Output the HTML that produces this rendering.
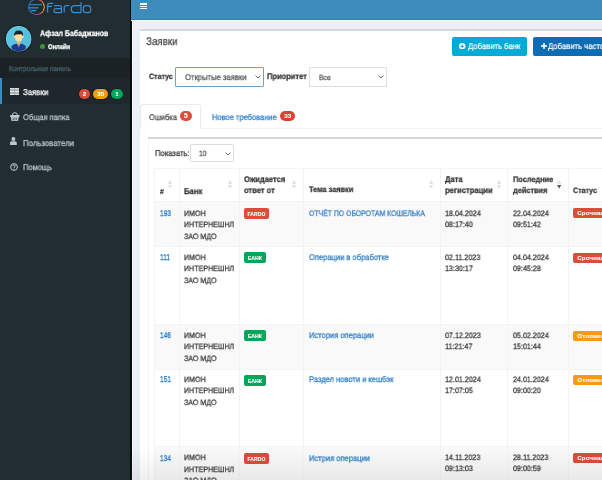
<!DOCTYPE html>
<html><head><meta charset="utf-8">
<style>
*{box-sizing:border-box;margin:0;padding:0}
html,body{width:602px;height:480px;overflow:hidden;background:#ecf0f5;font-family:"Liberation Sans",sans-serif;color:#333}
.abs{position:absolute}
.t{position:absolute;white-space:nowrap;line-height:1;text-rendering:geometricPrecision;-webkit-text-stroke:0.25px currentColor;will-change:transform}
.bd{position:absolute;color:#fff;font-weight:bold;text-align:center;white-space:nowrap;overflow:hidden;-webkit-text-stroke:0.1px #fff;will-change:transform}
</style></head><body>
<div class="abs" style="left:0px;top:0px;width:131px;height:480px;background:#222d32"></div>
<div class="abs" style="left:130.4px;top:0px;width:1.2px;height:480px;background:#0a0c0e"></div>
<div class="abs" style="left:131.6px;top:20px;width:1.4px;height:460px;background:#f6f8fb"></div>
<svg class="abs" style="left:0;top:0" width="131" height="20" viewBox="0 0 131 20">
<defs><linearGradient id="lg" x1="0" y1="0.5" x2="1" y2="0.3"><stop offset="0" stop-color="#2466c2"/><stop offset="0.45" stop-color="#3a7fd0"/><stop offset="0.6" stop-color="#c05a7a"/><stop offset="0.8" stop-color="#f39030"/><stop offset="1" stop-color="#f39030"/></linearGradient></defs>
<path d="M28.8 4.75h13.2M28 7.8h10.5M31 10.6h5" stroke="#2e9bd2" stroke-width="1.2"/>
<g fill="none" stroke="#3b8cce" stroke-width="1.2" stroke-linejoin="round">
<path d="M47.6 12.6V5.2q0-1.9 1.9-1.9h3.7M47.6 6.4h4.4"/>
<path d="M54 5.6h5.6q1.9 0 1.9 1.9v5.1h-5.6q-1.9 0-1.9-1.9v-0.2q0-1.9 1.9-1.9h5.6"/>
<path d="M64.2 12.6V7.5q0-1.9 1.9-1.9h3.3"/>
<path d="M81 2.2v10.4h-6.6q-3.1 0-3.1-3.1v-0.8q0-3.1 3.1-3.1h6.6"/>
<rect x="83.3" y="5.6" width="7.4" height="7" rx="2.6"/>
</g></svg>
<div class="abs" style="left:27.75px;top:-1.45px;width:16.9px;height:16.9px;border-radius:50%;background:conic-gradient(from 0deg,#b0588a 0deg,#e8703e 45deg,#f39030 80deg,#f08a34 125deg,#c8607a 160deg,#6a5ab0 190deg,#2a6fc6 220deg,#2a6fc6 320deg,#4a62b0 345deg,#b0588a 360deg);-webkit-mask:radial-gradient(circle,transparent 6.9px,#000 7.3px,#000 8.45px,transparent 8.5px)"></div>
<svg class="abs" style="left:4px;top:25px" width="29" height="29" viewBox="0 0 29 29">
<defs><clipPath id="cp"><circle cx="14.65" cy="13.65" r="12.4"/></clipPath></defs>
<circle cx="14.65" cy="13.65" r="13.7" fill="#161d21"/>
<circle cx="14.65" cy="13.65" r="12.7" fill="#78d6ec"/>
<circle cx="14.65" cy="13.65" r="12" fill="#58c6e2"/>
<g clip-path="url(#cp)">
<path d="M22 2 L30 10 L30 30 L14 30 Z" fill="#4db8d6" opacity="0.5"/>
<path d="M7 29 L7.6 21.2 Q9.5 19 14.65 18.6 Q19.8 19 21.7 21.2 L22.3 29 Z" fill="#1f3b8c"/>
<path d="M13.2 18.7 L14.65 22.5 L16.1 18.7 Z" fill="#e9f0f6"/>
<path d="M14.2 19.5 L14.65 23 L15.1 19.5 Z" fill="#1a2a6a"/>
<rect x="13" y="15" width="3.3" height="3.8" fill="#efb26c"/>
<ellipse cx="10.3" cy="11.8" rx="0.9" ry="1.3" fill="#f3cf92"/>
<ellipse cx="19" cy="11.8" rx="0.9" ry="1.3" fill="#f3cf92"/>
<path d="M10.6 8.5 Q10.6 16.8 14.65 16.8 Q18.7 16.8 18.7 8.5 Z" fill="#f8dca2"/>
<path d="M10.2 11.3 Q9.6 5.3 14.65 5.4 Q19.7 5.3 19.1 11.3 Q18.6 9.6 17.2 9.3 Q14.5 8.9 12.2 9.6 Q10.8 10 10.2 11.3Z" fill="#1f1f22"/>
</g></svg>
<div class="t" style="left:40px;top:29.72px;font-size:8.25px;color:#fff;font-weight:bold;transform:scaleX(0.85);transform-origin:0 0;">Афзал Бабаджанов</div>
<div class="abs" style="left:40.3px;top:44.4px;width:5px;height:5px;border-radius:50%;background:#3f913f"></div>
<div class="t" style="left:48.4px;top:45.33px;font-size:6.93px;color:#fff;font-weight:bold;transform:scaleX(0.8455);transform-origin:0 0;">Онлайн</div>
<div class="abs" style="left:0px;top:58px;width:130px;height:20px;background:#1a2226"></div>
<div class="t" style="left:8.6px;top:65.95px;font-size:7.15px;color:#4b646f;transform:scaleX(0.9091);transform-origin:0 0;">Контрольная панель</div>
<div class="abs" style="left:0px;top:78px;width:130px;height:26px;background:#1e282c"></div>
<div class="abs" style="left:0px;top:78px;width:2px;height:26px;background:#3c8dbc"></div>
<svg class="abs" style="left:9.8px;top:87.8px" width="9" height="7" viewBox="0 0 9 7"><rect x="0" y="0" width="9" height="7" fill="#a9acae"/><path d="M0 0.8h9M0 3.5h9M0 6.2h9" stroke="#eef0f1" stroke-width="1.1"/><path d="M4.6 0v7" stroke="#8d9194" stroke-width="0.6"/></svg>
<div class="t" style="left:23.3px;top:87.64px;font-size:8.58px;color:#fff;transform:scaleX(0.9091);transform-origin:0 0;">Заявки</div>
<div class="bd" style="box-shadow:0 0 0 0.8px #161d21;left:79px;top:89.1px;width:11.2px;height:10.4px;line-height:10.4px;background:#dd4b39;border-radius:5.5px;font-size:6.2px;padding-top:0.3px">2</div>
<div class="bd" style="box-shadow:0 0 0 0.8px #161d21;left:93px;top:89.1px;width:15.3px;height:10.4px;line-height:10.4px;background:#f39c12;border-radius:5.5px;font-size:6.2px;padding-top:0.3px">35</div>
<div class="bd" style="box-shadow:0 0 0 0.8px #161d21;left:111px;top:89.1px;width:11.9px;height:10.4px;line-height:10.4px;background:#00a65a;border-radius:5.5px;font-size:6.2px;padding-top:0.3px">1</div>
<svg class="abs" style="left:10px;top:112px" width="9.6" height="9" viewBox="0 0 9.6 9"><path d="M2.2 3.6 Q2.2 0.6 4.8 0.6 Q7.4 0.6 7.4 3.6" fill="none" stroke="#b8c7ce" stroke-width="1"/><rect x="0" y="3" width="9.6" height="2" rx="0.4" fill="#b8c7ce"/><path d="M0.8 5 L1.6 9 H8 L8.8 5Z" fill="#b8c7ce"/><path d="M3.2 5.6v2.8M4.8 5.6v2.8M6.4 5.6v2.8" stroke="#222d32" stroke-width="0.6"/></svg>
<div class="t" style="left:23.3px;top:114.02px;font-size:8.25px;color:#b8c7ce;transform:scaleX(0.9091);transform-origin:0 0;">Общая папка</div>
<svg class="abs" style="left:10px;top:137.2px" width="6.8" height="8" viewBox="0 0 6.8 8"><circle cx="3.4" cy="2" r="2" fill="#b8c7ce"/><path d="M0 8 V5.8 Q0 4.3 1.6 4.3 H5.2 Q6.8 4.3 6.8 5.8 V8Z" fill="#b8c7ce"/></svg>
<div class="t" style="left:23.3px;top:138.64px;font-size:8.58px;color:#b8c7ce;transform:scaleX(0.9091);transform-origin:0 0;">Пользователи</div>
<svg class="abs" style="left:9.5px;top:163px" width="8" height="8" viewBox="0 0 8 8">
<circle cx="4" cy="4" r="3.4" fill="none" stroke="#b8c7ce" stroke-width="1"/>
<path d="M2.8 3.2 Q2.8 1.8 4 1.8 Q5.3 1.8 5.3 3 Q5.3 3.8 4 4.3 V5" fill="none" stroke="#b8c7ce" stroke-width="0.9"/><circle cx="4" cy="6.1" r="0.55" fill="#b8c7ce"/></svg>
<div class="t" style="left:23.3px;top:163.82px;font-size:8.25px;color:#b8c7ce;transform:scaleX(0.9091);transform-origin:0 0;">Помощь</div>
<div class="abs" style="left:131px;top:0px;width:471px;height:20px;background:#3c8dbc"></div>
<div class="abs" style="left:131px;top:19.1px;width:471px;height:1.2px;background:#357ca8"></div>
<div class="abs" style="left:131px;top:20.3px;width:471px;height:1px;background:#f8fafc"></div>
<div class="abs" style="left:140px;top:3.4px;width:7px;height:1.4px;background:#fff"></div>
<div class="abs" style="left:140px;top:5.9px;width:7px;height:1.3px;background:#fff"></div>
<div class="abs" style="left:140px;top:8.2px;width:7px;height:1.3px;background:#fff"></div>
<div class="abs" style="left:140px;top:29px;width:462px;height:451px;background:#fff"></div>
<div class="abs" style="left:140px;top:29px;width:462px;height:2px;background:#d2d6de"></div>
<div class="t" style="left:146px;top:36.38px;font-size:10.89px;color:#444;transform:scaleX(0.8909);transform-origin:0 0;font-size:11px;top:37.4px;">Заявки</div>
<div class="abs" style="left:451.5px;top:36.5px;width:75.5px;height:19px;background:#00acd6;border-radius:2px"></div>
<svg class="abs" style="left:459.4px;top:43px" width="6.4" height="6.4" viewBox="0 0 8 8"><circle cx="4" cy="4" r="4" fill="#fff"/><path d="M4 1.8v4.4M1.8 4h4.4" stroke="#00acd6" stroke-width="1.3"/></svg>
<div class="t" style="left:467.5px;top:42.13px;font-size:8.47px;color:#fff;transform:scaleX(0.9091);transform-origin:0 0;-webkit-text-stroke:0.2px #fff;">Добавить банк</div>
<div class="abs" style="left:533px;top:36.5px;width:80px;height:19px;background:#0d6db3;border-radius:2px"></div>
<svg class="abs" style="left:540.6px;top:43.4px" width="6" height="6" viewBox="0 0 8 8"><path d="M4 0v8M0 4h8" stroke="#fff" stroke-width="2"/></svg>
<div class="t" style="left:547.6px;top:42.13px;font-size:8.47px;color:#fff;transform:scaleX(0.9091);transform-origin:0 0;-webkit-text-stroke:0.2px #fff;">Добавить частоз</div>
<div class="t" style="left:148.6px;top:72.93px;font-size:7.766px;color:#333;font-weight:bold;transform:scaleX(0.9091);transform-origin:0 0;">Статус</div>
<div class="abs" style="left:175.2px;top:67.3px;width:88.5px;height:19.4px;border:1px solid #6da2cc;background:#fff;border-radius:1px"></div>
<div class="t" style="left:185.4px;top:73.37px;font-size:8.426px;color:#555;transform:scaleX(0.9091);transform-origin:0 0;">Открытые заявки</div>
<svg class="abs" style="left:254.5px;top:74.5px" width="6" height="4" viewBox="0 0 6 4"><path d="M0.5 0.5 L3 3 L5.5 0.5" fill="none" stroke="#555" stroke-width="0.9"/></svg>
<div class="t" style="left:266.6px;top:72.52px;font-size:8.25px;color:#333;font-weight:bold;transform:scaleX(0.9091);transform-origin:0 0;">Приоритет</div>
<div class="abs" style="left:308.8px;top:67.3px;width:78.2px;height:19.3px;border:1px solid #dadee5;background:#fff;border-radius:1px"></div>
<div class="t" style="left:319.3px;top:74.08px;font-size:7.59px;color:#555;transform:scaleX(0.9091);transform-origin:0 0;">Все</div>
<svg class="abs" style="left:377.5px;top:75px" width="6" height="4" viewBox="0 0 6 4"><path d="M0.5 0.5 L3 3 L5.5 0.5" fill="none" stroke="#555" stroke-width="0.9"/></svg>
<div class="abs" style="left:140px;top:128px;width:462px;height:1px;background:#f4f4f4"></div>
<div class="abs" style="left:140.3px;top:104.4px;width:60.6px;height:24.6px;background:#fff;border:1px solid #eaeaea;border-bottom:none;border-radius:3px 3px 0 0"></div>
<div class="t" style="left:149.2px;top:114.31px;font-size:8.261px;color:#4a4a4a;transform:scaleX(0.9091);transform-origin:0 0;">Ошибка</div>
<div class="bd" style="left:180.2px;top:110.9px;width:11.6px;height:10.3px;line-height:10.3px;background:#dd4b39;border-radius:5.5px;font-size:6.6px;padding-top:0px">5</div>
<div class="t" style="left:211.5px;top:113.99px;font-size:8.283px;color:#2c7dcc;transform:scaleX(0.9091);transform-origin:0 0;">Новое требование</div>
<div class="bd" style="left:279.5px;top:111px;width:15.4px;height:10.1px;line-height:10.1px;background:#d8432f;border-radius:5px;font-size:6.2px;padding-top:0px">33</div>
<div class="abs" style="left:147.7px;top:137.2px;width:460px;height:2px;background:#d2d6de"></div>
<div class="abs" style="left:147.7px;top:139px;width:1px;height:341px;background:#f6f6f6"></div>
<div class="t" style="left:154.7px;top:148.70px;font-size:8.382px;color:#333;transform:scaleX(0.9091);transform-origin:0 0;">Показать:</div>
<div class="abs" style="left:190.3px;top:144.3px;width:43.3px;height:17.3px;border:1px solid #d9dde4;border-radius:2px;background:#fff"></div>
<div class="t" style="left:199.3px;top:149.98px;font-size:7.7px;color:#555;transform:scaleX(0.8636);transform-origin:0 0;">10</div>
<svg class="abs" style="left:225px;top:151.5px" width="6" height="4" viewBox="0 0 6 4"><path d="M0.5 0.5 L3 3 L5.5 0.5" fill="none" stroke="#555" stroke-width="0.9"/></svg>
<div class="abs" style="left:154.4px;top:168px;width:447.6px;height:33px;background:#fff"></div>
<div class="abs" style="left:154.4px;top:201px;width:447.6px;height:44.80000000000001px;background:#f9f9f9"></div>
<div class="abs" style="left:154.4px;top:245.8px;width:447.6px;height:77.80000000000001px;background:#fff"></div>
<div class="abs" style="left:154.4px;top:323.6px;width:447.6px;height:45.0px;background:#f9f9f9"></div>
<div class="abs" style="left:154.4px;top:368.6px;width:447.6px;height:77.69999999999999px;background:#fff"></div>
<div class="abs" style="left:154.4px;top:446.3px;width:447.6px;height:73.69999999999999px;background:#f9f9f9"></div>
<div class="abs" style="left:154.4px;top:168px;width:447.6px;height:1px;background:#f4f4f4"></div>
<div class="abs" style="left:154.4px;top:201px;width:447.6px;height:1px;background:#f4f4f4"></div>
<div class="abs" style="left:154.4px;top:245.8px;width:447.6px;height:1px;background:#f4f4f4"></div>
<div class="abs" style="left:154.4px;top:323.6px;width:447.6px;height:1px;background:#f4f4f4"></div>
<div class="abs" style="left:154.4px;top:368.6px;width:447.6px;height:1px;background:#f4f4f4"></div>
<div class="abs" style="left:154.4px;top:446.3px;width:447.6px;height:1px;background:#f4f4f4"></div>
<div class="abs" style="left:154.4px;top:168px;width:1px;height:312px;background:#f4f4f4"></div>
<div class="abs" style="left:179.2px;top:168px;width:1px;height:312px;background:#f4f4f4"></div>
<div class="abs" style="left:239.2px;top:168px;width:1px;height:312px;background:#f4f4f4"></div>
<div class="abs" style="left:303.3px;top:168px;width:1px;height:312px;background:#f4f4f4"></div>
<div class="abs" style="left:440px;top:168px;width:1px;height:312px;background:#f4f4f4"></div>
<div class="abs" style="left:507.2px;top:168px;width:1px;height:312px;background:#f4f4f4"></div>
<div class="abs" style="left:568px;top:168px;width:1px;height:312px;background:#f4f4f4"></div>
<div class="t" style="left:159.7px;top:187.65px;font-size:7.26px;color:#333;font-weight:bold;transform:scaleX(0.9091);transform-origin:0 0;">#</div>
<div class="t" style="left:184px;top:187.20px;font-size:8.503px;color:#333;font-weight:bold;transform:scaleX(0.9091);transform-origin:0 0;">Банк</div>
<div class="t" style="left:243.8px;top:175.26px;font-size:8.316px;color:#333;font-weight:bold;transform:scaleX(0.9091);transform-origin:0 0;">Ожидается</div>
<div class="t" style="left:243.8px;top:186.16px;font-size:8.316px;color:#333;font-weight:bold;transform:scaleX(0.9091);transform-origin:0 0;">ответ от</div>
<div class="t" style="left:308.8px;top:186.33px;font-size:8.118px;color:#333;font-weight:bold;transform:scaleX(0.9091);transform-origin:0 0;">Тема заявки</div>
<div class="t" style="left:444.8px;top:175.20px;font-size:8.393px;color:#333;font-weight:bold;transform:scaleX(0.9091);transform-origin:0 0;">Дата</div>
<div class="t" style="left:444.8px;top:186.10px;font-size:8.393px;color:#333;font-weight:bold;transform:scaleX(0.9091);transform-origin:0 0;">регистрации</div>
<div class="t" style="left:512.7px;top:176.43px;font-size:8.118px;color:#333;font-weight:bold;transform:scaleX(0.9091);transform-origin:0 0;">Последние</div>
<div class="t" style="left:512.7px;top:187.43px;font-size:8.118px;color:#333;font-weight:bold;transform:scaleX(0.9091);transform-origin:0 0;">действия</div>
<div class="t" style="left:573.2px;top:186.59px;font-size:7.81px;color:#333;font-weight:bold;transform:scaleX(0.9091);transform-origin:0 0;">Статус</div>
<svg class="abs" style="left:167.9px;top:180.2px" width="4.2" height="8.8" viewBox="0 0 4.2 8.8"><path d="M0 3.9 L2.1 0 L4.2 3.9Z" fill="#e2e2e2"/><path d="M0 4.9 L2.1 8.8 L4.2 4.9Z" fill="#e2e2e2"/></svg>
<svg class="abs" style="left:227.9px;top:180.2px" width="4.2" height="8.8" viewBox="0 0 4.2 8.8"><path d="M0 3.9 L2.1 0 L4.2 3.9Z" fill="#e2e2e2"/><path d="M0 4.9 L2.1 8.8 L4.2 4.9Z" fill="#e2e2e2"/></svg>
<svg class="abs" style="left:292.3px;top:180.2px" width="4.2" height="8.8" viewBox="0 0 4.2 8.8"><path d="M0 3.9 L2.1 0 L4.2 3.9Z" fill="#e2e2e2"/><path d="M0 4.9 L2.1 8.8 L4.2 4.9Z" fill="#e2e2e2"/></svg>
<svg class="abs" style="left:429px;top:180.2px" width="4.2" height="8.8" viewBox="0 0 4.2 8.8"><path d="M0 3.9 L2.1 0 L4.2 3.9Z" fill="#e2e2e2"/><path d="M0 4.9 L2.1 8.8 L4.2 4.9Z" fill="#e2e2e2"/></svg>
<svg class="abs" style="left:496.75px;top:180.2px" width="4.2" height="8.8" viewBox="0 0 4.2 8.8"><path d="M0 3.9 L2.1 0 L4.2 3.9Z" fill="#e2e2e2"/><path d="M0 4.9 L2.1 8.8 L4.2 4.9Z" fill="#e2e2e2"/></svg>
<svg class="abs" style="left:557.1px;top:180.2px" width="4.2" height="8.8" viewBox="0 0 4.2 8.8"><path d="M0 3.9 L2.1 0 L4.2 3.9Z" fill="#e2e2e2"/><path d="M0 4.9 L2.1 8.8 L4.2 4.9Z" fill="#5a5a5a"/></svg>
<div class="t" style="left:159.8px;top:209.32px;font-size:8.36px;color:#2a7bc4;transform:scaleX(0.7909);transform-origin:0 0;-webkit-text-stroke:0.35px currentColor;">193</div>
<div class="t" style="left:184px;top:209.78px;font-size:7.821px;color:#333;transform:scaleX(0.9091);transform-origin:0 0;">ИМОН</div>
<div class="t" style="left:184px;top:221.23px;font-size:7.821px;color:#333;transform:scaleX(0.9091);transform-origin:0 0;">ИНТЕРНЕШНЛ</div>
<div class="t" style="left:184px;top:232.68px;font-size:7.821px;color:#333;transform:scaleX(0.9091);transform-origin:0 0;">ЗАО МДО</div>
<div class="bd" style="left:244.1px;top:207.9px;width:24.9px;height:10.7px;line-height:10.7px;background:#dd4b39;border-radius:2px;font-size:5.1px;padding-top:0.8px">FARDO</div>
<div class="t" style="left:308.8px;top:209.60px;font-size:8.03px;color:#2a7bc4;transform:scaleX(0.8582);transform-origin:0 0;">ОТЧЁТ ПО ОБОРОТАМ КОШЕЛЬКА</div>
<div class="t" style="left:445.2px;top:209.74px;font-size:7.865px;color:#333;transform:scaleX(0.9091);transform-origin:0 0;">18.04.2024</div>
<div class="t" style="left:445.2px;top:221.19px;font-size:7.865px;color:#333;transform:scaleX(0.9091);transform-origin:0 0;">08:17:40</div>
<div class="t" style="left:512.7px;top:209.74px;font-size:7.865px;color:#333;transform:scaleX(0.9091);transform-origin:0 0;">22.04.2024</div>
<div class="t" style="left:512.7px;top:221.19px;font-size:7.865px;color:#333;transform:scaleX(0.9091);transform-origin:0 0;">09:51:42</div>
<div class="bd" style="left:572.7px;top:207.90px;width:40px;height:10.4px;line-height:10.4px;background:#dd4b39;border-radius:2px;font-size:6.1px;text-align:left;padding-left:4.3px;letter-spacing:0.15px">Срочная</div>
<div class="t" style="left:159.8px;top:253.22px;font-size:8.36px;color:#2a7bc4;transform:scaleX(0.7909);transform-origin:0 0;-webkit-text-stroke:0.35px currentColor;">111</div>
<div class="t" style="left:184px;top:253.68px;font-size:7.821px;color:#333;transform:scaleX(0.9091);transform-origin:0 0;">ИМОН</div>
<div class="t" style="left:184px;top:265.13px;font-size:7.821px;color:#333;transform:scaleX(0.9091);transform-origin:0 0;">ИНТЕРНЕШНЛ</div>
<div class="t" style="left:184px;top:276.58px;font-size:7.821px;color:#333;transform:scaleX(0.9091);transform-origin:0 0;">ЗАО МДО</div>
<div class="bd" style="left:244.1px;top:252.4px;width:21.7px;height:10.7px;line-height:10.7px;background:#00a65a;border-radius:2px;font-size:5.2px;padding-top:0.8px">БАНК</div>
<div class="t" style="left:308.8px;top:253.27px;font-size:8.305px;color:#2a7bc4;transform:scaleX(0.9091);transform-origin:0 0;">Операции в обработке</div>
<div class="t" style="left:445.2px;top:253.64px;font-size:7.865px;color:#333;transform:scaleX(0.9091);transform-origin:0 0;">02.11.2023</div>
<div class="t" style="left:445.2px;top:265.09px;font-size:7.865px;color:#333;transform:scaleX(0.9091);transform-origin:0 0;">13:30:17</div>
<div class="t" style="left:512.7px;top:253.64px;font-size:7.865px;color:#333;transform:scaleX(0.9091);transform-origin:0 0;">04.04.2024</div>
<div class="t" style="left:512.7px;top:265.09px;font-size:7.865px;color:#333;transform:scaleX(0.9091);transform-origin:0 0;">09:45:28</div>
<div class="bd" style="left:572.7px;top:252.70px;width:40px;height:10.4px;line-height:10.4px;background:#dd4b39;border-radius:2px;font-size:6.1px;text-align:left;padding-left:4.3px;letter-spacing:0.15px">Срочная</div>
<div class="t" style="left:159.8px;top:331.42px;font-size:8.36px;color:#2a7bc4;transform:scaleX(0.7909);transform-origin:0 0;-webkit-text-stroke:0.35px currentColor;">146</div>
<div class="t" style="left:184px;top:331.88px;font-size:7.821px;color:#333;transform:scaleX(0.9091);transform-origin:0 0;">ИМОН</div>
<div class="t" style="left:184px;top:343.33px;font-size:7.821px;color:#333;transform:scaleX(0.9091);transform-origin:0 0;">ИНТЕРНЕШНЛ</div>
<div class="t" style="left:184px;top:354.78px;font-size:7.821px;color:#333;transform:scaleX(0.9091);transform-origin:0 0;">ЗАО МДО</div>
<div class="bd" style="left:244.1px;top:330.20000000000005px;width:21.7px;height:10.7px;line-height:10.7px;background:#00a65a;border-radius:2px;font-size:5.2px;padding-top:0.8px">БАНК</div>
<div class="t" style="left:308.8px;top:331.47px;font-size:8.305px;color:#2a7bc4;transform:scaleX(0.9091);transform-origin:0 0;">История операции</div>
<div class="t" style="left:445.2px;top:331.84px;font-size:7.865px;color:#333;transform:scaleX(0.9091);transform-origin:0 0;">07.12.2023</div>
<div class="t" style="left:445.2px;top:343.29px;font-size:7.865px;color:#333;transform:scaleX(0.9091);transform-origin:0 0;">11:21:47</div>
<div class="t" style="left:512.7px;top:331.84px;font-size:7.865px;color:#333;transform:scaleX(0.9091);transform-origin:0 0;">05.02.2024</div>
<div class="t" style="left:512.7px;top:343.29px;font-size:7.865px;color:#333;transform:scaleX(0.9091);transform-origin:0 0;">15:01:44</div>
<div class="bd" style="left:572.7px;top:330.50px;width:40px;height:10.4px;line-height:10.4px;background:#f39c12;border-radius:2px;font-size:6.1px;text-align:left;padding-left:4.3px;letter-spacing:0.15px">Отложено</div>
<div class="t" style="left:159.8px;top:375.42px;font-size:8.36px;color:#2a7bc4;transform:scaleX(0.7909);transform-origin:0 0;-webkit-text-stroke:0.35px currentColor;">151</div>
<div class="t" style="left:184px;top:375.88px;font-size:7.821px;color:#333;transform:scaleX(0.9091);transform-origin:0 0;">ИМОН</div>
<div class="t" style="left:184px;top:387.33px;font-size:7.821px;color:#333;transform:scaleX(0.9091);transform-origin:0 0;">ИНТЕРНЕШНЛ</div>
<div class="t" style="left:184px;top:398.78px;font-size:7.821px;color:#333;transform:scaleX(0.9091);transform-origin:0 0;">ЗАО МДО</div>
<div class="bd" style="left:244.1px;top:374.50000000000006px;width:21.7px;height:10.7px;line-height:10.7px;background:#00a65a;border-radius:2px;font-size:5.2px;padding-top:0.8px">БАНК</div>
<div class="t" style="left:308.8px;top:375.47px;font-size:8.305px;color:#2a7bc4;transform:scaleX(0.9091);transform-origin:0 0;">Раздел новоти и кешбэк</div>
<div class="t" style="left:445.2px;top:375.84px;font-size:7.865px;color:#333;transform:scaleX(0.9091);transform-origin:0 0;">12.01.2024</div>
<div class="t" style="left:445.2px;top:387.29px;font-size:7.865px;color:#333;transform:scaleX(0.9091);transform-origin:0 0;">17:07:05</div>
<div class="t" style="left:512.7px;top:375.84px;font-size:7.865px;color:#333;transform:scaleX(0.9091);transform-origin:0 0;">24.01.2024</div>
<div class="t" style="left:512.7px;top:387.29px;font-size:7.865px;color:#333;transform:scaleX(0.9091);transform-origin:0 0;">09:00:20</div>
<div class="bd" style="left:572.7px;top:374.80px;width:40px;height:10.4px;line-height:10.4px;background:#f39c12;border-radius:2px;font-size:6.1px;text-align:left;padding-left:4.3px;letter-spacing:0.15px">Отложено</div>
<div class="t" style="left:159.8px;top:453.62px;font-size:8.36px;color:#2a7bc4;transform:scaleX(0.7909);transform-origin:0 0;-webkit-text-stroke:0.35px currentColor;">134</div>
<div class="t" style="left:184px;top:454.08px;font-size:7.821px;color:#333;transform:scaleX(0.9091);transform-origin:0 0;">ИМОН</div>
<div class="t" style="left:184px;top:465.53px;font-size:7.821px;color:#333;transform:scaleX(0.9091);transform-origin:0 0;">ИНТЕРНЕШНЛ</div>
<div class="t" style="left:184px;top:476.98px;font-size:7.821px;color:#333;transform:scaleX(0.9091);transform-origin:0 0;">ЗАО МДО</div>
<div class="bd" style="left:244.1px;top:453.2px;width:24.9px;height:10.7px;line-height:10.7px;background:#dd4b39;border-radius:2px;font-size:5.1px;padding-top:0.8px">FARDO</div>
<div class="t" style="left:308.8px;top:453.67px;font-size:8.305px;color:#2a7bc4;transform:scaleX(0.9091);transform-origin:0 0;">Истрия операции</div>
<div class="t" style="left:445.2px;top:454.04px;font-size:7.865px;color:#333;transform:scaleX(0.9091);transform-origin:0 0;">14.11.2023</div>
<div class="t" style="left:445.2px;top:465.49px;font-size:7.865px;color:#333;transform:scaleX(0.9091);transform-origin:0 0;">09:13:03</div>
<div class="t" style="left:512.7px;top:454.04px;font-size:7.865px;color:#333;transform:scaleX(0.9091);transform-origin:0 0;">28.11.2023</div>
<div class="t" style="left:512.7px;top:465.49px;font-size:7.865px;color:#333;transform:scaleX(0.9091);transform-origin:0 0;">09:00:59</div>
<div class="bd" style="left:572.7px;top:453.20px;width:40px;height:10.4px;line-height:10.4px;background:#dd4b39;border-radius:2px;font-size:6.1px;text-align:left;padding-left:4.3px;letter-spacing:0.15px">Срочная</div>
<div class="abs" style="left:131px;top:448px;width:471px;height:32px;background:linear-gradient(to bottom,rgba(0,0,0,0),rgba(40,50,60,0.08))"></div>
</body></html>
